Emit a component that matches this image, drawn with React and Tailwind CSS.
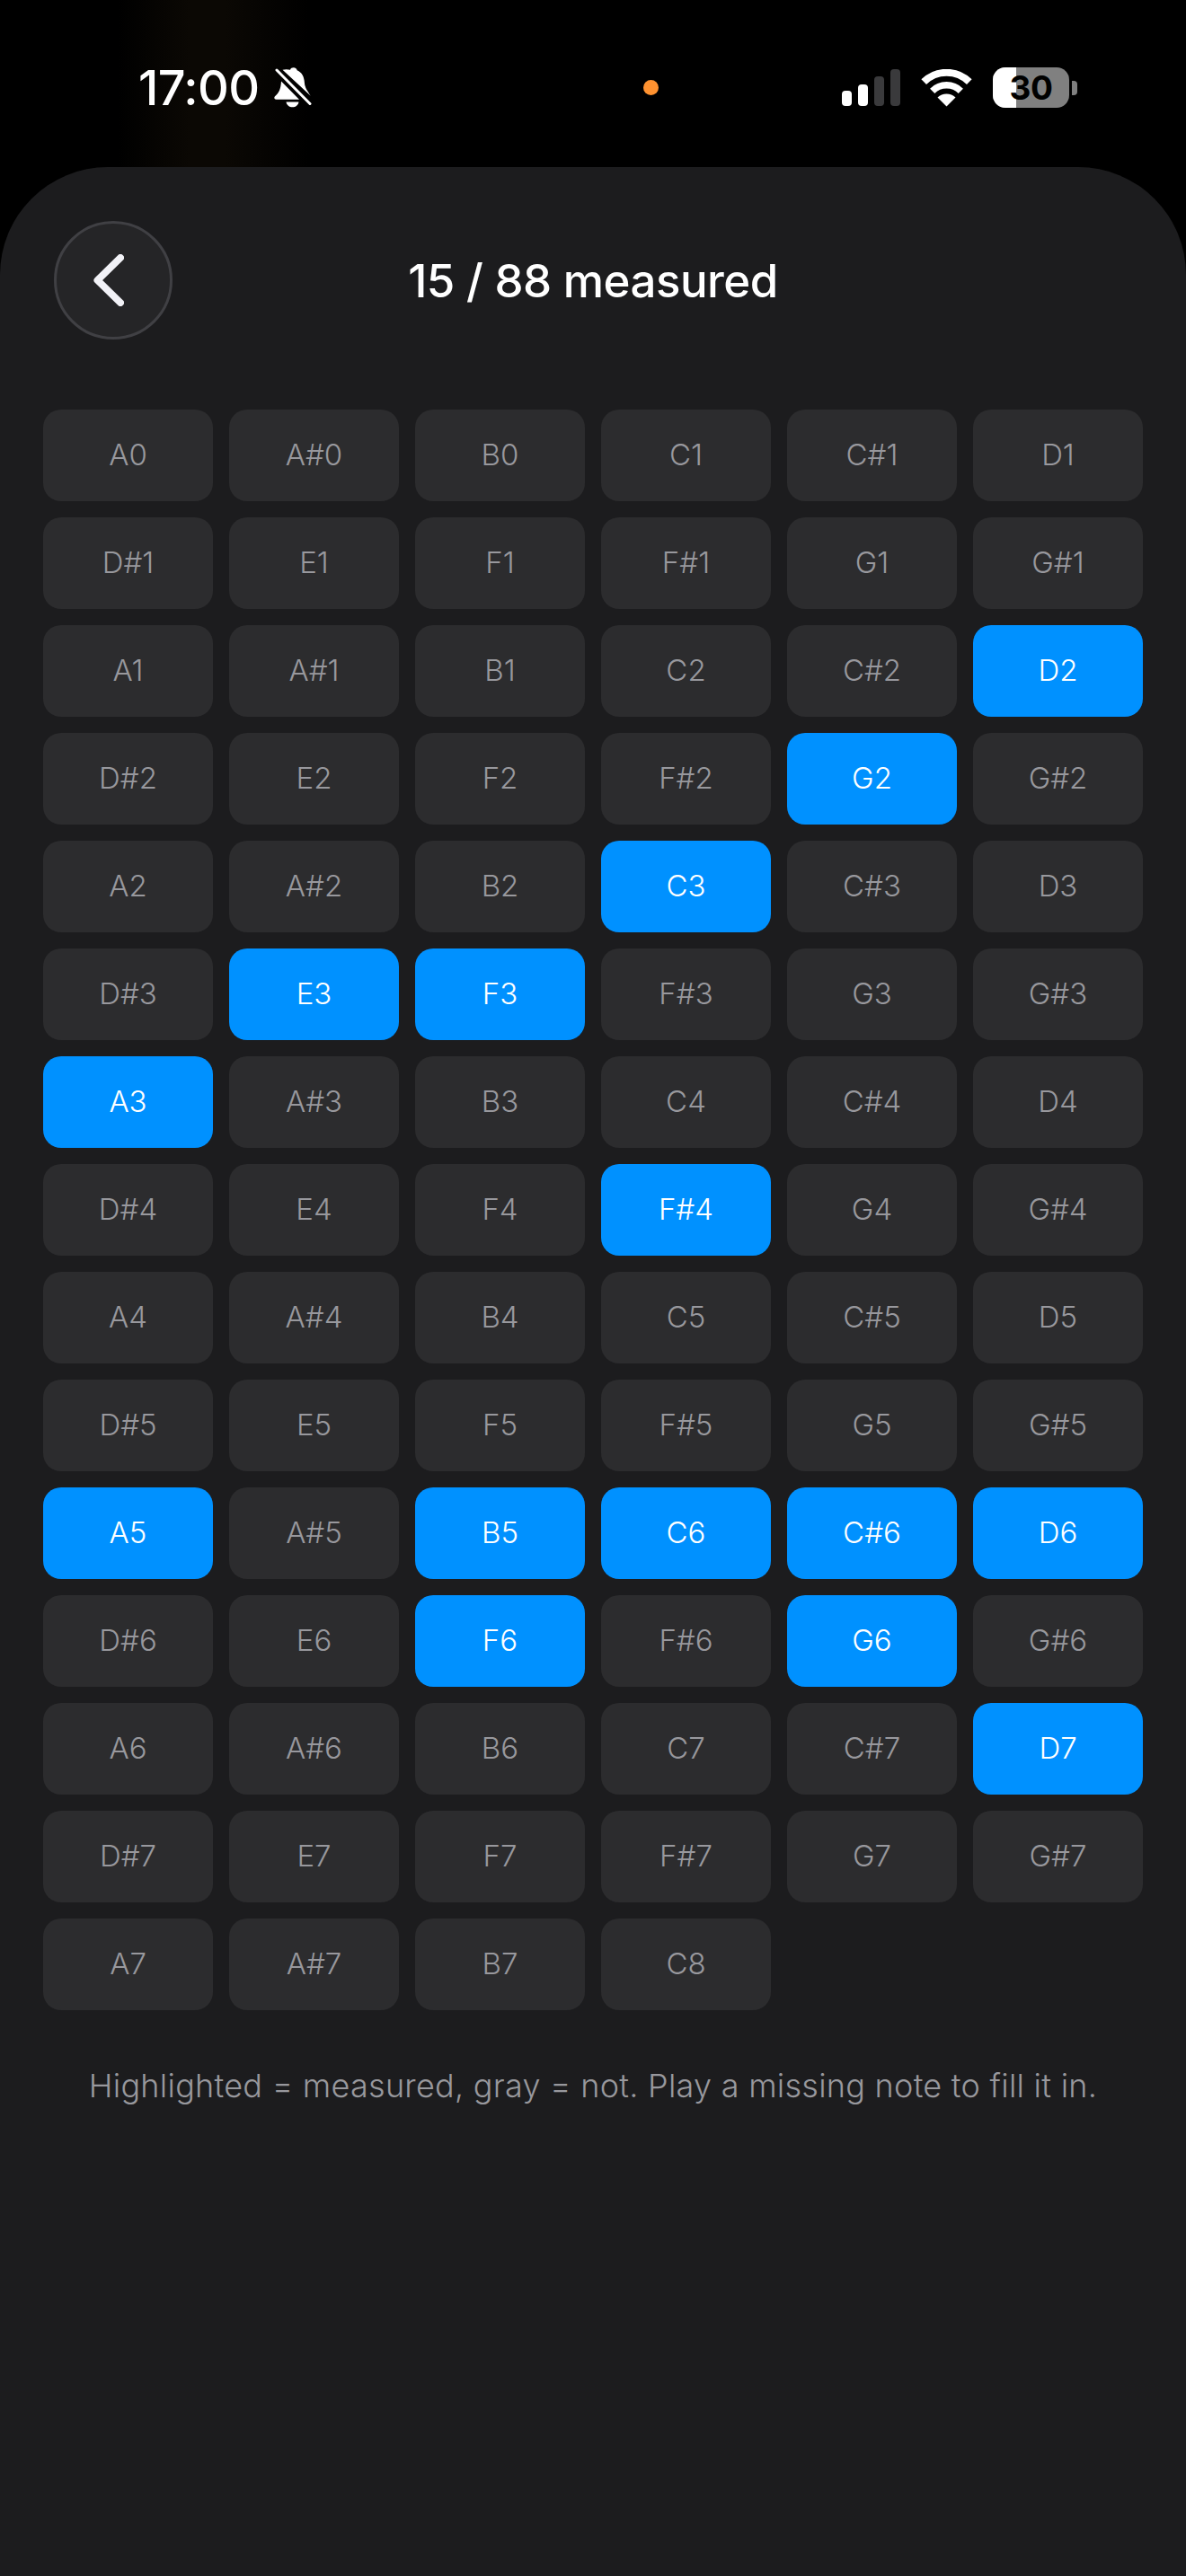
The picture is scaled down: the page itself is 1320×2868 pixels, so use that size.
const NAMES = ['A','A#','B','C','C#','D','D#','E','F','F#','G','G#'];
const notes = Array.from({ length: 88 }, (_, i) => {
  const name = NAMES[i % 12];
  const octave = Math.floor((i + 9) / 12);
  return name + octave;
});
const MEASURED = new Set(['D2','G2','C3','E3','F3','A3','F#4','A5','B5','C6','C#6','D6','F6','G6','D7']);

function BellSlash() {
  return (
    <svg width="42" height="45" viewBox="0 0 42 45" fill="#fff" className="block shrink-0">
      <path d="M9.5 2.8 C12 2 15.5 2 18 2.8 C18.5 1 20 0.3 21.7 0.3 C24 0.3 25.3 1.7 25.6 3.3 C31 5.5 33.5 10.5 33.9 17 C34.3 23 37.5 26.5 40.8 31.8 Z" />
      <path d="M8 15.5 L28 35.8 L2.5 35.8 C0.3 35.8 -0.3 33.5 1 32.2 C5.5 28.5 7.5 24 8 15.5 Z" />
      <path d="M13.5 38.5 H27.5 C27 42 24 44.3 20.5 44.3 C17 44.3 14 42 13.5 38.5 Z" />
      <path d="M3 3 L40 40.5" stroke="#fff" strokeWidth="3" strokeLinecap="round" fill="none" />
    </svg>
  );
}

function Signal() {
  return (
    <div className="flex items-end gap-[7px] h-[41px]">
      <div className="w-[11px] h-[17px] rounded-[4px] bg-white" />
      <div className="w-[11px] h-[24px] rounded-[4px] bg-white" />
      <div className="w-[11px] h-[33px] rounded-[4px] bg-[#3a3a3c]" />
      <div className="w-[11px] h-[41px] rounded-[4px] bg-[#3a3a3c]" />
    </div>
  );
}

function Wifi() {
  return (
    <svg width="57" height="42" viewBox="0 0 57 42" className="block" fill="none" stroke="#fff">
      <path d="M3.2 14.2 A36 36 0 0 1 53.8 14.2" strokeWidth="8" />
      <path d="M12.7 24.3 A22.5 22.5 0 0 1 44.3 24.3" strokeWidth="7.5" />
      <path d="M28.5 41.5 L18.5 31.5 A14.5 14.5 0 0 1 38.5 31.5 Z" fill="#fff" stroke="none" />
    </svg>
  );
}

function Battery() {
  return (
    <div className="flex items-center gap-[3px]">
      <div className="relative w-[85px] h-[45px] rounded-[14px] overflow-hidden bg-[#808080] flex items-center justify-center">
        <div className="absolute left-0 top-0 bottom-0 w-[26px] bg-white" />
        <span className="relative text-[37px] leading-none font-bold text-black font-['Inter',sans-serif] tracking-[-0.5px]">30</span>
      </div>
      <div className="w-[6px] h-[16px] rounded-r-[4px] bg-[#808080]" />
    </div>
  );
}

export default function App() {
  return (
    <div className="w-[1320px] h-[2868px] bg-black flex flex-col font-['Inter',sans-serif] overflow-hidden">
      <div className="h-[186px] shrink-0 flex items-start pl-[154px] pr-[121px] pt-[75px] bg-[linear-gradient(90deg,#000_10%,#0b0804_16%,#0b0804_19%,#000_26%)]">
        <div className="flex items-center gap-[14px] h-[45px]">
          <span className="block w-[137px] text-white text-[54px] leading-none font-[550] tracking-[-0.6px] whitespace-nowrap">17:00</span>
          <BellSlash />
        </div>
        <div className="ml-[369px] h-[45px] flex items-center">
          <div className="w-[17px] h-[17px] rounded-full bg-[#ff9230]" />
        </div>
        <div className="ml-auto flex items-center gap-[23px] h-[45px]">
          <Signal />
          <Wifi />
          <Battery />
        </div>
      </div>

      <div className="flex-1 bg-[#1c1c1e] rounded-t-[120px]">
        <div className="grid grid-cols-[132px_1fr_132px] items-center px-[60px] pt-[60px] mb-[78px]">
          <div className="w-[132px] h-[132px] rounded-full bg-[#252527] border-[3px] border-[#404044] flex items-center justify-center">
            <svg width="34" height="58" viewBox="0 0 34 58" fill="none" stroke="#f2f2f7" strokeWidth="8" strokeLinecap="round" strokeLinejoin="round" className="block -translate-x-[5px]">
              <path d="M30 4 L4.5 29 L30 54" />
            </svg>
          </div>
          <h1 className="text-center text-white text-[51px] leading-none font-[550] tracking-[-0.5px]">15 / 88 measured</h1>
          <div />
        </div>

        <div className="grid grid-cols-6 gap-[18px] px-[48px]">
          {notes.map((n) => {
            const on = MEASURED.has(n);
            return (
              <div
                key={n}
                className={on
                  ? "h-[102px] rounded-[20px] bg-[#0091ff] text-white flex items-center justify-center text-[33px] font-[350]"
                  : "h-[102px] rounded-[20px] bg-[#2c2c2e] text-[#98989d] flex items-center justify-center text-[33px] font-light"}
              >
                {n}
              </div>
            );
          })}
        </div>

        <p className="mt-[60px] text-center text-[#98989d] text-[36px] leading-[48px] font-light tracking-[0.26px]">
          Highlighted = measured, gray = not. Play a missing note to fill it in.
        </p>
      </div>
    </div>
  );
}
